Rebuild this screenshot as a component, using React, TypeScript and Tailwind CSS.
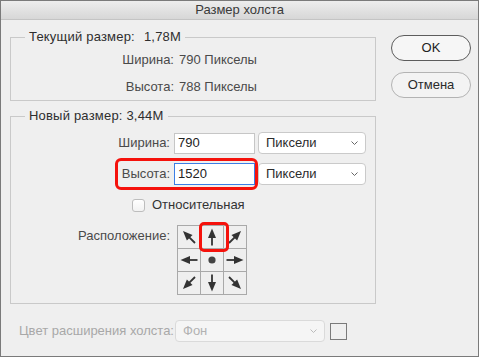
import React from "react";

const Arrow = ({ angle }: { angle: number }) => (
  <svg width="22" height="22" viewBox="0 0 22 22">
    <g transform={`rotate(${angle} 11 11)`}>
      <line x1="11" y1="19.5" x2="11" y2="10" stroke="#333" strokeWidth="1.8" />
      <polygon points="11,2.5 7,12 15,12" fill="#333" />
    </g>
  </svg>
);

const Dot = () => (
  <svg width="22" height="22" viewBox="0 0 22 22">
    <circle cx="11" cy="11" r="3.6" fill="#444" />
  </svg>
);

const Chevron = ({ color = "#666" }: { color?: string }) => (
  <svg width="7" height="4" viewBox="0 0 7 4">
    <polyline points="0.5,0.5 3.5,3.5 6.5,0.5" fill="none" stroke={color} strokeWidth="1" />
  </svg>
);

const Select = ({ label }: { label: string }) => (
  <div className="w-[108px] h-[22px] bg-white border border-[#cacaca] rounded-[4px] flex items-center justify-between pl-[7px] pr-[7px] text-[#2c2c2c]">
    <span>{label}</span>
    <Chevron />
  </div>
);

export default function App() {
  const cells: Array<number | null> = [-45, 0, 45, -90, null, 90, -135, 180, 135];
  return (
    <div className="w-[479px] h-[357px] bg-[#efefef] border border-[#7a7a7a] flex flex-col font-['Liberation_Sans',Arial,sans-serif] text-[13px] leading-[16px] text-[#333] overflow-hidden">
      <div className="h-[19px] shrink-0 border-b border-[#c4c4c4] bg-gradient-to-b from-[#ededed] to-[#d7d7d7] flex items-center justify-center text-[#3a3a3a]">
        Размер холста
      </div>
      <div className="flex pl-[9px]">
        <div className="w-[366px] flex flex-col">
          <fieldset className="mt-[9px] border border-[#c9c9c9] pb-[5px]">
            <legend className="ml-[14px] px-[4px] text-[#2e2e2e] tracking-[0.2px]">
              Текущий размер:<span className="ml-[9px]">1,78M</span>
            </legend>
            <div className="mt-[7px] flex flex-col gap-[11px] text-[#4a4a4a]">
              <div className="flex">
                <span className="w-[163px] text-right">Ширина:</span>
                <span className="ml-[5px]">790 Пикселы</span>
              </div>
              <div className="flex">
                <span className="w-[163px] text-right">Высота:</span>
                <span className="ml-[5px]">788 Пикселы</span>
              </div>
            </div>
          </fieldset>
          <fieldset className="mt-[7px] border border-[#c9c9c9] pb-[8px]">
            <legend className="ml-[14px] px-[4px] text-[#2e2e2e] tracking-[0.2px]">Новый размер: 3,44M</legend>
            <div className="mt-[8px] flex items-center">
              <span className="w-[159px] text-right text-[#4a4a4a]">Ширина:</span>
              <div className="ml-[4px] w-[81px] h-[21px] bg-white border border-[#c6c6c6] pl-[3px] flex items-center text-[#222]">
                790
              </div>
              <div className="ml-[3px]">
                <Select label="Пиксели" />
              </div>
            </div>
            <div className="relative mt-[9px] flex items-center">
              <span className="w-[159px] text-right text-[#4a4a4a]">Высота:</span>
              <div className="ml-[4px] w-[81px] h-[22px] bg-white border border-[#3b7ee6] pl-[3px] flex items-center text-[#222]">
                1520
              </div>
              <div className="ml-[3px]">
                <Select label="Пиксели" />
              </div>
              <div className="absolute left-[104px] top-[-5px] w-[143px] h-[32px] border-[3px] border-[#f5120c] rounded-[6px]" />
            </div>
            <div className="mt-[12px] flex items-center">
              <div className="ml-[121px] w-[13px] h-[13px] rounded-[3px] border border-[#bdbdbd] bg-gradient-to-b from-white to-[#f2f2f2]" />
              <span className="ml-[7px] text-[#333]">Относительная</span>
            </div>
            <div className="mt-[12px] flex items-start">
              <span className="w-[159px] mt-[3px] text-right text-[#4a4a4a]">Расположение:</span>
              <div className="relative ml-[7px]">
                <div className="grid grid-cols-[22px_22px_22px] grid-rows-[22px_22px_22px] gap-[1px] bg-[#a9a9a9] border border-[#a9a9a9]">
                  {cells.map((a, i) => (
                    <div key={i} className="bg-[#efefef] flex items-center justify-center">
                      {a === null ? <Dot /> : <Arrow angle={a} />}
                    </div>
                  ))}
                </div>
                <div className="absolute left-[22px] top-[-3px] w-[30px] h-[30px] border-[3px] border-[#f5120c] rounded-[5px]" />
              </div>
            </div>
          </fieldset>
        </div>
        <div className="ml-[15px] mt-[15px] flex flex-col gap-[11px]">
          <div className="w-[80px] h-[26px] rounded-full border border-[#5c5c5c] bg-[#f6f6f6] flex items-center justify-center text-[#222]">
            OK
          </div>
          <div className="w-[80px] h-[26px] rounded-full border border-[#b3b3b3] bg-[#f3f3f3] flex items-center justify-center text-[#2a2a2a]">
            Отмена
          </div>
        </div>
      </div>
      <div className="mt-[16px] pl-[18px] flex items-center">
        <span className="w-[156px] text-[#a8a8a8]">Цвет расширения холста:</span>
        <div className="w-[150px] h-[22px] bg-[#f5f5f5] border border-[#dadada] rounded-[4px] flex items-center justify-between pl-[7px] pr-[7px] text-[#b2b2b2]">
          <span>Фон</span>
          <Chevron color="#bbbbbb" />
        </div>
        <div className="ml-[5px] w-[17px] h-[17px] border border-[#7a7a7a] bg-[#efefef]" />
      </div>
    </div>
  );
}
